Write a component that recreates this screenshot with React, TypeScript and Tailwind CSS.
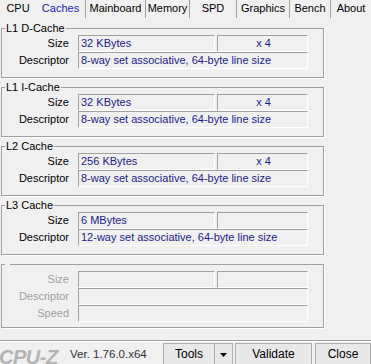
import React from "react";

const tabs = [
  { n: "CPU", w: "w-[36px]", sep: false, active: false },
  { n: "Caches", w: "w-[50px]", sep: true, active: true },
  { n: "Mainboard", w: "w-[60px]", sep: true, active: false },
  { n: "Memory", w: "w-[44px]", sep: true, active: false },
  { n: "SPD", w: "w-[47px]", sep: true, active: false },
  { n: "Graphics", w: "w-[53px]", sep: true, active: false },
  { n: "Bench", w: "w-[41px]", sep: true, active: false },
  { n: "About", w: "w-[40px]", sep: false, active: false },
];

function Field({ children, className = "" }: { children?: React.ReactNode; className?: string }) {
  return (
    <div
      className={
        "h-[17px] border border-t-[#a0a0a0] border-l-[#a0a0a0] border-r-white border-b-white pl-[2px] leading-[15px] text-[11px] text-[#1c1c8c] whitespace-nowrap overflow-hidden " +
        className
      }
    >
      {children}
    </div>
  );
}

function Row({ label, children, dim = false }: { label: string; children: React.ReactNode; dim?: boolean }) {
  return (
    <div className="flex items-center h-[17px]">
      <div className={"w-[67px] text-right leading-[15px] " + (dim ? "text-[#a0a0a0]" : "text-black")}>{label}</div>
      <div className="ml-[9px] flex gap-[2px]">{children}</div>
    </div>
  );
}

function Group({ title, children, pb = "pb-[8px]" }: { title?: string; children: React.ReactNode; pb?: string }) {
  return (
    <fieldset className={"ml-[1px] w-[323px] border border-[#a0a0a0] shadow-[1px_1px_0_#fff] " + pb}>
      <legend className="ml-[3px] px-[1px] leading-[12px] h-[12px] text-black">{title ?? "\u00a0"}</legend>
      <div className="pt-[1px] flex flex-col">{children}</div>
    </fieldset>
  );
}

function CacheGroup({ title, size, count, desc }: { title: string; size: string; count: string; desc: string }) {
  return (
    <Group title={title}>
      <Row label="Size">
        <Field className="w-[137px]">{size}</Field>
        <Field className="w-[91px] text-center">{count}</Field>
      </Row>
      <Row label="Descriptor">
        <Field className="w-[230px]">{desc}</Field>
      </Row>
    </Group>
  );
}

export default function App() {
  return (
    <div className="w-[371px] h-[364px] overflow-hidden bg-[#f0f0f0] text-[11px] font-['Liberation_Sans',Arial,sans-serif] select-none">
      {/* Tabs */}
      <div className="flex h-[22px] items-start">
        {tabs.map((t) => (
          <div
            key={t.n}
            className={
              "h-[18px] pt-[2px] text-center leading-[13px] text-[11px] " +
              t.w +
              " " +
              (t.sep ? "border-r border-[#a0a0a0] " : "") +
              (t.active ? "text-[#1c1cc0]" : "text-black")
            }
          >
            {t.n}
          </div>
        ))}
      </div>

      <div className="flex flex-col gap-[3px]">
        <CacheGroup title="L1 D-Cache" size="32 KBytes" count="x 4" desc="8-way set associative, 64-byte line size" />
        <CacheGroup title="L1 I-Cache" size="32 KBytes" count="x 4" desc="8-way set associative, 64-byte line size" />
        <CacheGroup title="L2 Cache" size="256 KBytes" count="x 4" desc="8-way set associative, 64-byte line size" />
        <CacheGroup title="L3 Cache" size="6 MBytes" count="" desc="12-way set associative, 64-byte line size" />
        <Group pb="pb-[5px]">
          <Row label="Size" dim>
            <Field className="w-[137px]" />
            <Field className="w-[91px]" />
          </Row>
          <Row label="Descriptor" dim>
            <Field className="w-[230px]" />
          </Row>
          <Row label="Speed" dim>
            <Field className="w-[230px]" />
          </Row>
        </Group>
      </div>

      {/* Bottom bar */}
      <div className="mt-[12px] border-t border-[#a0a0a0] shadow-[inset_0_1px_0_#fff] h-[30px] flex items-start">
        <div className="mt-[4px] -ml-[1px] w-[66px] text-[20px] leading-[24px] font-bold italic text-[#b4b4b4] tracking-[-0.5px]">
          CPU-Z
        </div>
        <div className="ml-[5px] w-[93px] mt-[7px] text-[11.5px] leading-[13px] text-[#303030] whitespace-nowrap">
          Ver. 1.76.0.x64
        </div>
        <div className="mt-[2px] flex h-[23px] w-[70px] border border-[#adadad] bg-[#e8e8e8]">
          <div className="flex-1 text-center leading-[21px] text-[12px] text-black">Tools</div>
          <div className="w-[18px] border-l border-[#adadad] flex items-center justify-center">
            <svg width="7" height="4" viewBox="0 0 7 4">
              <path d="M0 0H7L3.5 4Z" fill="#000" />
            </svg>
          </div>
        </div>
        <div className="ml-[2px] mt-[2px] h-[23px] w-[77px] border border-[#adadad] bg-[#e8e8e8] text-center leading-[21px] text-[12px] text-black">
          Validate
        </div>
        <div className="ml-[3px] mt-[2px] h-[23px] flex-1 border border-[#adadad] bg-[#e8e8e8] text-center leading-[21px] text-[12px] text-black">
          Close
        </div>
      </div>
    </div>
  );
}
